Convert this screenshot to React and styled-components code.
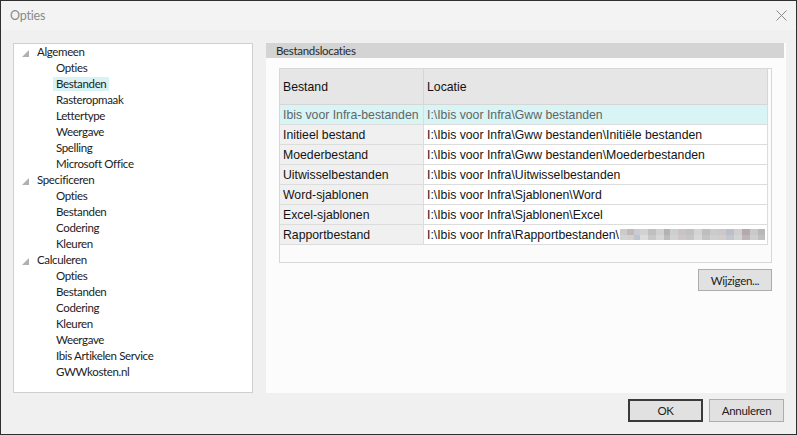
import React from "react";
import styled, { createGlobalStyle } from "styled-components";

const Global = createGlobalStyle`
  html, body { margin: 0; padding: 0; background: #f0f0f0; }
  * { box-sizing: border-box; }
`;

const UI_FONT = `Lato, "Noto Sans", "Segoe UI", sans-serif`;

const Window = styled.div`
  width: 797px;
  height: 435px;
  border: 1px solid #2f2f2f;
  background: #f0f0f0;
  display: flex;
  flex-direction: column;
  font-family: ${UI_FONT};
  font-size: 11.5px;
  overflow: hidden;
`;

const TitleBar = styled.div`
  height: 29px;
  flex: none;
  background: #f3f3f3;
  display: flex;
  align-items: center;
  justify-content: space-between;
  padding: 0 9px 0 9px;
  color: #8a8a8a;
  font-size: 12.5px;
  letter-spacing: -0.2px;
`;

const Body = styled.div`
  height: 363px;
  flex: none;
  display: flex;
  gap: 13px;
  padding: 13px 10px 0 12px;
`;

const Tree = styled.div`
  width: 240px;
  height: 350px;
  background: #fff;
  border: 1px solid #cfcfcf;
  display: flex;
  flex-direction: column;
`;

const TreeRow = styled.div`
  height: 16px;
  display: flex;
  align-items: center;
  padding-left: ${(p) => (p.$child ? 39 : 8)}px;
  color: #222;
  font-size: 11.5px;
  letter-spacing: -0.35px;
  white-space: nowrap;
`;

const Glyph = styled.svg`
  width: 7px;
  height: 7px;
  margin-right: 8px;
  margin-top: 3px;
  flex: none;
`;

const Label = styled.span`
  height: 14px;
  line-height: 14px;
  padding: 0 3px;
  margin-left: ${(p) => (p.$child ? 0 : -3)}px;
  background: ${(p) => (p.$selected ? "#d8f3f3" : "transparent")};
`;

const Panel = styled.div`
  width: 520px;
  height: 350px;
  background: #fcfcfc;
  display: flex;
  flex-direction: column;
`;

const GroupHeader = styled.div`
  height: 15px;
  margin-right: 2px;
  background: #d4d4d4;
  color: #2a2a2a;
  line-height: 15px;
  padding-left: 10px;
  font-size: 11.5px;
  letter-spacing: -0.3px;
`;

const TableBox = styled.div`
  margin: 10px 14px 0 13px;
  height: 195px;
  border: 1px solid #d7d7d7;
  background: #fbfbfb;
  padding-right: 3px;
  font-family: "Liberation Sans", Arial, sans-serif;
  font-size: 12.25px;
`;

const Grid = styled.div`
  display: grid;
  grid-template-columns: 144px 1fr;
`;

const HeadCell = styled.div`
  height: 36px;
  background: #e6e6e6;
  border-bottom: 1px solid #d6d6d6;
  border-right: 1px solid #d6d6d6;
  display: flex;
  align-items: center;
  padding-left: 3px;
  color: #111;
`;

const Cell = styled.div`
  height: 20px;
  display: flex;
  align-items: center;
  padding-left: 3px;
  white-space: nowrap;
  overflow: hidden;
  border-bottom: 1px solid #dcdcdc;
  border-right: 1px solid #dcdcdc;
  background: ${(p) => (p.$selected ? "#d9f4f4" : p.$first ? "#f0f0f0" : "#ffffff")};
  color: ${(p) => (p.$selected ? "#5e6666" : "#141414")};
`;

const Blur = styled.span`
  display: inline-block;
  width: 145px;
  height: 11px;
  margin-left: 1px;
  background:
    linear-gradient(to right,
      #cbcbcb 0 7px, #c4b8b9 7px 14px, #c8ccd3 14px 20px, #d2d2d2 20px 28px,
      #bfbfbf 28px 36px, #d0d0d0 36px 44px, #b2b2b2 44px 50px, #cecece 50px 58px,
      #cac3c5 58px 66px, #c1c1c1 66px 74px, #d4d4d4 74px 82px, #bebebe 82px 90px,
      #cbcbcb 90px 98px, #ccc7c9 98px 106px, #bbc0c8 106px 114px, #cfcfcf 114px 122px,
      #b4aaac 122px 130px, #c9c9c9 130px 138px, #b8b8b8 138px 145px) top / 100% 6px no-repeat,
    linear-gradient(to right,
      #d3d3d3 0 7px, #d5d0d0 7px 14px, #c0c4ce 14px 20px, #dcdcdc 20px 28px,
      #c8c8c8 28px 36px, #d6d6d6 36px 44px, #bcbcbc 44px 50px, #d2d2d2 50px 58px,
      #cec7c8 58px 66px, #c6c6c6 66px 74px, #d8d8d8 74px 82px, #c4c4c4 82px 90px,
      #d0d0d0 90px 98px, #d2cdce 98px 106px, #c4c7ce 106px 114px, #d4d4d4 114px 122px,
      #beb5b7 122px 130px, #cecece 130px 138px, #c0c0c0 138px 145px) bottom / 100% 5px no-repeat;
`;

const ButtonRow = styled.div`
  display: flex;
  justify-content: flex-end;
  padding: ${(p) => (p.$footer ? "6px 12px 0 0" : "6px 14px 0 0")};
  gap: 6px;
`;

const Button = styled.button`
  width: ${(p) => (p.$wide ? 75 : 74)}px;
  height: ${(p) => (p.$wide ? 23 : 22)}px;
  margin: 0;
  padding: 0;
  font-family: ${UI_FONT};
  font-size: 11.5px;
  letter-spacing: -0.3px;
  color: #222;
  background: #e1e1e1;
  border: ${(p) => (p.$default ? "2px solid #3a3a3a" : "1px solid #adadad")};
  display: flex;
  align-items: center;
  justify-content: center;
`;

const tree = [
  { label: "Algemeen", children: ["Opties", "Bestanden", "Rasteropmaak", "Lettertype", "Weergave", "Spelling", "Microsoft Office"] },
  { label: "Specificeren", children: ["Opties", "Bestanden", "Codering", "Kleuren"] },
  { label: "Calculeren", children: ["Opties", "Bestanden", "Codering", "Kleuren", "Weergave", "Ibis Artikelen Service", "GWWkosten.nl"] },
];

const rows = [
  ["Ibis voor Infra-bestanden", "I:\\Ibis voor Infra\\Gww bestanden"],
  ["Initieel bestand", "I:\\Ibis voor Infra\\Gww bestanden\\Initiële bestanden"],
  ["Moederbestand", "I:\\Ibis voor Infra\\Gww bestanden\\Moederbestanden"],
  ["Uitwisselbestanden", "I:\\Ibis voor Infra\\Uitwisselbestanden"],
  ["Word-sjablonen", "I:\\Ibis voor Infra\\Sjablonen\\Word"],
  ["Excel-sjablonen", "I:\\Ibis voor Infra\\Sjablonen\\Excel"],
  ["Rapportbestand", "I:\\Ibis voor Infra\\Rapportbestanden\\"],
];

export default function App() {
  return (
    <>
      <Global />
      <Window>
        <TitleBar>
          <span>Opties</span>
          <svg width="11" height="11" viewBox="0 0 11 11">
            <path d="M0.5 0.5 L10.5 10.5 M10.5 0.5 L0.5 10.5" stroke="#8a8a8a" strokeWidth="1" fill="none" />
          </svg>
        </TitleBar>
        <Body>
          <Tree>
            {tree.map((g, gi) => (
              <React.Fragment key={gi}>
                <TreeRow>
                  <Glyph viewBox="0 0 7 7">
                    <polygon points="7,0 7,7 0,7" fill="#b0b0b0" />
                  </Glyph>
                  <Label>{g.label}</Label>
                </TreeRow>
                {g.children.map((c, ci) => (
                  <TreeRow $child key={ci}>
                    <Label $child $selected={gi === 0 && ci === 1}>{c}</Label>
                  </TreeRow>
                ))}
              </React.Fragment>
            ))}
          </Tree>
          <Panel>
            <GroupHeader>Bestandslocaties</GroupHeader>
            <TableBox>
              <Grid>
                <HeadCell>Bestand</HeadCell>
                <HeadCell>Locatie</HeadCell>
                {rows.map((r, i) => (
                  <React.Fragment key={i}>
                    <Cell $first $selected={i === 0}>{r[0]}</Cell>
                    <Cell $selected={i === 0}>
                      {r[1]}
                      {i === 6 && <Blur />}
                    </Cell>
                  </React.Fragment>
                ))}
              </Grid>
            </TableBox>
            <ButtonRow>
              <Button>Wijzigen...</Button>
            </ButtonRow>
          </Panel>
        </Body>
        <ButtonRow $footer>
          <Button $wide $default>OK</Button>
          <Button $wide>Annuleren</Button>
        </ButtonRow>
      </Window>
    </>
  );
}
